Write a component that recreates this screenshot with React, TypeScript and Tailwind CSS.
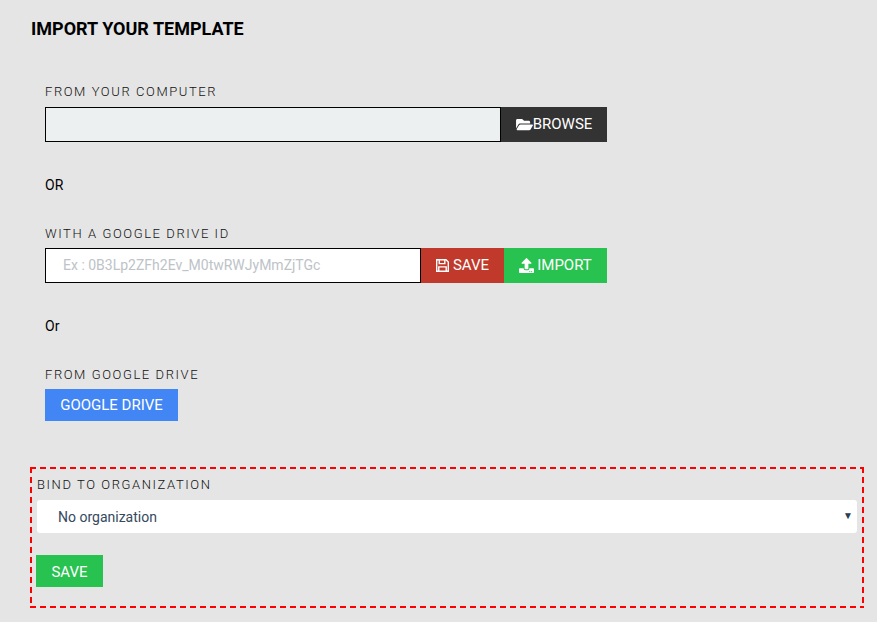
import { FaFolderOpen, FaUpload } from "react-icons/fa"

function SaveIcon() {
  return (
    <svg viewBox="0 0 14 14" className="w-[13px] h-[13px] mr-[4px]" fill="none" stroke="currentColor" strokeWidth="1.5">
      <path d="M.75.75h10l2.5 2.5v10H.75z" />
      <path d="M3.5 1v4h6V1M3 13V8.5h8V13" />
    </svg>
  )
}

const labelClass = "block text-[13px] leading-[16px] font-light tracking-[1.58px] text-[#111]"
const btnText = "text-white text-[15px]"

export default function App() {
  return (
    <div className="min-h-[622px] bg-[#e5e5e5] font-['Roboto',sans-serif] text-black overflow-hidden">
      <div className="pl-[31px] pt-[18px]">
        <h1 className="text-[18px] leading-[22px] font-bold">IMPORT YOUR TEMPLATE</h1>
        <div className="pl-[14px] pt-[44px] w-[576px]">
          <label className={labelClass}>FROM YOUR COMPUTER</label>
          <div className="flex mt-[7px] h-[35px]">
            <div className="flex-1 bg-[#ecf0f1] border border-black" />
            <button className={`w-[106px] bg-[#333] flex items-center justify-center ${btnText}`}>
              <FaFolderOpen className="w-[17px] h-[15px]" />BROWSE
            </button>
          </div>
          <p className="mt-[35px] text-[14px] leading-[16px]">OR</p>
          <label className={`mt-[33px] ${labelClass}`}>WITH A GOOGLE DRIVE ID</label>
          <div className="flex mt-[6px] h-[35px]">
            <input
              className="flex-1 min-w-0 bg-white border border-black px-[17px] text-[14px] placeholder:text-[#bdc3c7]"
              placeholder="Ex : 0B3Lp2ZFh2Ev_M0twRWJyMmZjTGc"
            />
            <button className={`w-[83px] bg-[#c0392b] flex items-center justify-center ${btnText}`}>
              <SaveIcon />SAVE
            </button>
            <button className={`w-[103px] bg-[#27c24f] flex items-center justify-center ${btnText}`}>
              <FaUpload className="w-[15px] h-[15px] mr-[3px]" />IMPORT
            </button>
          </div>
          <p className="mt-[35px] text-[14px] leading-[16px]">Or</p>
          <label className={`mt-[33px] ${labelClass}`}>FROM GOOGLE DRIVE</label>
          <button className={`mt-[6px] block w-[133px] h-[32px] bg-[#4285f4] ${btnText}`}>GOOGLE DRIVE</button>
        </div>
      </div>
      <div className="ml-[30px] mt-[46px] w-[834px] h-[141px] px-[7px] pt-[10px] [background:repeating-linear-gradient(90deg,#f00_0_6px,transparent_6px_10px)_0_0/100%_2px_no-repeat,repeating-linear-gradient(90deg,#f00_0_6px,transparent_6px_10px)_0_100%/100%_2px_no-repeat,repeating-linear-gradient(180deg,#f00_0_6px,transparent_6px_10px)_0_0/2px_100%_no-repeat,repeating-linear-gradient(180deg,#f00_0_6px,transparent_6px_10px)_100%_0/2px_100%_no-repeat]">
        <label className={labelClass}>BIND TO ORGANIZATION</label>
        <div className="relative mt-[7px] h-[33px] pt-px bg-white rounded-[3px] flex items-center pl-[21px] text-[14px] text-[#34495e]">
          No organization
          <span className="absolute right-[4px] top-[10px] text-[10px] leading-[12px] text-[#2c3e50]">▼</span>
        </div>
        <button className={`mt-[22px] -ml-px block w-[67px] h-[32px] pt-[2px] bg-[#27c24f] ${btnText}`}>SAVE</button>
      </div>
    </div>
  )
}
